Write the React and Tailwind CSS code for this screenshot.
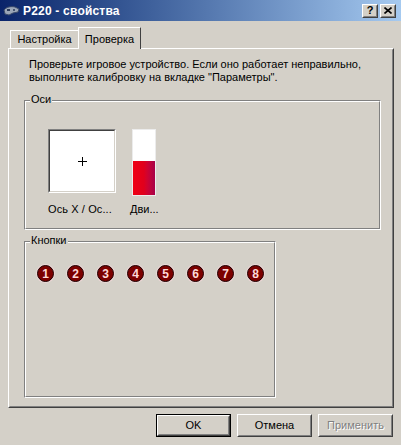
import React from 'react';

// classic raised 3d frame
const Raised = ({ className = '', children }) => (
  <div className={`border border-t-white border-l-white border-r-[#404040] border-b-[#404040] ${className}`}>
    <div className="w-full h-full border border-t-[#d4d0c8] border-l-[#d4d0c8] border-r-[#808080] border-b-[#808080] flex items-center justify-center">
      {children}
    </div>
  </div>
);

const GroupBox = ({ label, className = '', children }) => (
  <div className={`relative border border-t-[#808080] border-l-[#808080] border-r-white border-b-white ${className}`}>
    <div className="w-full h-full border border-t-white border-l-white border-r-[#808080] border-b-[#808080]">
      {children}
    </div>
    <span className="absolute left-[5px] top-[-8px] bg-[#d4d0c8] px-[1px] leading-[13px]">{label}</span>
  </div>
);

const TitleButton = ({ children }) => (
  <Raised className="w-[16px] h-[14px] bg-[#d4d0c8]">{children}</Raised>
);

const App = () => {
  const buttons = [1, 2, 3, 4, 5, 6, 7, 8];

  return (
    <div className="w-[401px] h-[445px] bg-[#d4d0c8] flex flex-col text-[11px] text-black font-['Liberation_Sans',Arial,sans-serif] overflow-hidden">
      {/* Title bar */}
      <div className="h-[21px] flex items-center bg-gradient-to-r from-[#0a246a] to-[#a6caf0] pl-[3px] pr-[5px]">
        <svg width="17" height="14" viewBox="0 0 17 14" className="mr-[3px]">
          <path d="M1 6 C3 3 8 2 12 3 L16 5 L15 8 L10 9 L6 11 L2 10 Z" fill="#9aa6b8" stroke="#3a4a6a" strokeWidth="1" />
          <rect x="4" y="5" width="3" height="2" fill="#2a3a5a" />
          <circle cx="11" cy="6" r="1" fill="#2a3a5a" />
        </svg>
        <span className="font-bold text-white text-[12px] tracking-[0.2px]">P220 - свойства</span>
        <div className="ml-auto flex gap-[2px]">
          <TitleButton>
            <span className="font-bold text-[11px] leading-none">?</span>
          </TitleButton>
          <TitleButton>
            <svg width="8" height="7" viewBox="0 0 8 7">
              <path d="M0.5 0.5 L7.5 6.5 M7.5 0.5 L0.5 6.5" stroke="#000" strokeWidth="1.6" />
            </svg>
          </TitleButton>
        </div>
      </div>

      {/* Tabs */}
      <div className="flex items-end h-[27px] pl-[10px]">
        <div className="h-[18px] w-[68px] border-t border-l border-t-white border-l-white flex items-center justify-center">
          Настройка
        </div>
        <div className="relative z-10 -mb-[1px] h-[22px] w-[63px] bg-[#d4d0c8] border-t border-l border-r border-t-white border-l-white border-r-[#404040] flex items-start justify-center pt-[3px]">
          Проверка
        </div>
      </div>

      {/* Tab panel */}
      <div className="ml-[8px] w-[386px] h-[360px] border border-t-white border-l-white border-r-[#404040] border-b-[#404040]">
        <div className="w-full h-full border border-t-[#d4d0c8] border-l-[#d4d0c8] border-r-[#808080] border-b-[#808080] flex flex-col pt-[8px]">
          <p className="pl-[19px] leading-[13px]">
            Проверьте игровое устройство. Если оно работает неправильно,
            <br />
            выполните калибровку на вкладке "Параметры".
          </p>

          <GroupBox label="Оси" className="ml-[14px] mt-[16px] w-[357px] h-[130px]">
            <div className="flex items-start gap-[14px] pl-[22px] pt-[27px]">
              <div className="flex flex-col items-start">
                <div className="w-[68px] h-[64px] border border-t-[#808080] border-l-[#808080] border-r-white border-b-white">
                  <div className="w-full h-full bg-white border border-t-[#404040] border-l-[#404040] border-r-[#d4d0c8] border-b-[#d4d0c8] flex items-center justify-center">
                    <svg width="9" height="9" viewBox="0 0 9 9">
                      <path d="M4.5 0 V9 M0 4.5 H9" stroke="#000" strokeWidth="1" />
                    </svg>
                  </div>
                </div>
                <span className="mt-[10px] leading-[13px] tracking-[0.1px]">Ось X / Ос...</span>
              </div>
              <div className="flex flex-col items-center">
                <div className="w-[24px] h-[67px] border border-[#ececec] bg-white flex flex-col justify-end">
                  <div className="h-[34px] bg-gradient-to-r from-[#f00014] via-[#e0001c] to-[#a80048]" />
                </div>
                <span className="mt-[7px] leading-[13px]">Дви...</span>
              </div>
            </div>
          </GroupBox>

          <GroupBox label="Кнопки" className="ml-[14px] mt-[11px] w-[252px] h-[157px]">
            <div className="flex gap-[13px] pl-[11px] pt-[22px]">
              {buttons.map((n) => (
                <div
                  key={n}
                  className="w-[17px] h-[17px] rounded-full bg-[#7c0000] border border-[#1a0000] shadow-[0_0_0_1px_#ecd6d6] flex items-center justify-center text-[#ffd8d8] font-bold text-[12px] leading-none"
                >
                  {n}
                </div>
              ))}
            </div>
          </GroupBox>
        </div>
      </div>

      {/* Dialog buttons */}
      <div className="flex justify-end gap-[6px] pr-[8px] mt-[6px]">
        <div className="w-[75px] h-[23px] border border-black">
          <Raised className="w-full h-full">OK</Raised>
        </div>
        <Raised className="w-[75px] h-[23px]">Отмена</Raised>
        <Raised className="w-[75px] h-[23px]">
          <span className="text-[#808080] [text-shadow:1px_1px_0_#fff]">Применить</span>
        </Raised>
      </div>
    </div>
  );
};

export default App;
